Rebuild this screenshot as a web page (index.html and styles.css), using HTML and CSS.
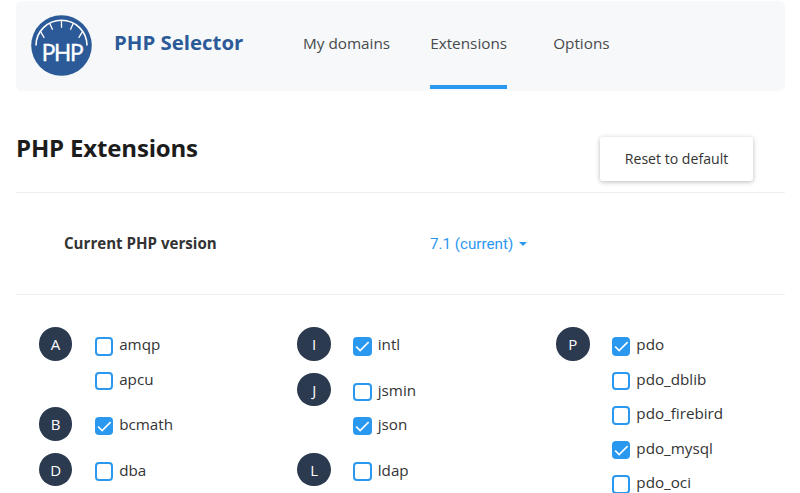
FILE: index.html
```html
<!DOCTYPE html>
<html lang="en">
<head>
<meta charset="utf-8">
<title>PHP Selector</title>
<link rel="stylesheet" href="styles.css">
</head>
<body>
<header class="bar">
  <svg class="logo" viewBox="0 0 61 61">
    <circle cx="30.5" cy="30.5" r="30.3" fill="#2c5a99"/>
    <g fill="none" stroke="#fff" stroke-width="1.3">
      <path stroke-width="1.6" d="M5 30.5a25.5 25.2 0 0 1 51 0"/>
      <path d="M30.5 5.5v7.3M18.8 8.4l2.8 6.4M42.2 8.4l-2.8 6.4M9.6 16.6l3.7 6.2M51.4 16.6l-3.7 6.2"/>
    </g>
    <text class="logo-text" x="31" y="45.6" text-anchor="middle">PHP</text>
  </svg>
  <span class="brand">PHP Selector</span>
  <nav class="tabs">
    <a class="tab">My domains</a>
    <a class="tab active">Extensions</a>
    <a class="tab">Options</a>
  </nav>
</header>
<main>
  <section class="heading">
    <h1>PHP Extensions</h1>
    <button class="reset">Reset to default</button>
  </section>
  <section class="version">
    <span class="version-label">Current PHP version</span>
    <a class="version-value">7.1 (current)<i class="caret"></i></a>
  </section>
  <section class="columns">
    <div class="column">
      <div class="group"><b class="letter">A</b><div class="items">
        <label class="item"><i class="box"></i>amqp</label>
        <label class="item"><i class="box"></i>apcu</label>
      </div></div>
      <div class="group"><b class="letter">B</b><div class="items">
        <label class="item"><i class="box on"><svg viewBox="0 0 18 18"><path d="M3 9.3l4 4L15.3 5"/></svg></i>bcmath</label>
      </div></div>
      <div class="group"><b class="letter">D</b><div class="items">
        <label class="item"><i class="box"></i>dba</label>
      </div></div>
    </div>
    <div class="column">
      <div class="group"><b class="letter">I</b><div class="items">
        <label class="item"><i class="box on"><svg viewBox="0 0 18 18"><path d="M3 9.3l4 4L15.3 5"/></svg></i>intl</label>
      </div></div>
      <div class="group"><b class="letter">J</b><div class="items">
        <label class="item"><i class="box"></i>jsmin</label>
        <label class="item"><i class="box on"><svg viewBox="0 0 18 18"><path d="M3 9.3l4 4L15.3 5"/></svg></i>json</label>
      </div></div>
      <div class="group"><b class="letter">L</b><div class="items">
        <label class="item"><i class="box"></i>ldap</label>
      </div></div>
    </div>
    <div class="column">
      <div class="group"><b class="letter">P</b><div class="items">
        <label class="item"><i class="box on"><svg viewBox="0 0 18 18"><path d="M3 9.3l4 4L15.3 5"/></svg></i>pdo</label>
        <label class="item"><i class="box"></i>pdo_dblib</label>
        <label class="item"><i class="box"></i>pdo_firebird</label>
        <label class="item"><i class="box on"><svg viewBox="0 0 18 18"><path d="M3 9.3l4 4L15.3 5"/></svg></i>pdo_mysql</label>
        <label class="item"><i class="box"></i>pdo_oci</label>
      </div></div>
    </div>
  </section>
</main>
</body>
</html>
```
FILE: styles.css
```css
* { box-sizing: border-box; }
html { overflow: hidden; }
body {
  margin: 0;
  padding: 1px 15px 0 16px;
  height: 493px;
  overflow: hidden;
  background: #fff;
  color: #333;
  font: 15.2px/20px "Open Sans", sans-serif;
}
.bar {
  display: flex;
  height: 90px;
  border-radius: 6px;
  background: #f6f8fa;
}
.logo { width: 61px; height: 61px; margin: 14px 0 0 15px; flex: none; }
.logo-text { font: 22.5px Lato, sans-serif; fill: #fff; stroke: #fff; stroke-width: .3; letter-spacing: -1.2px; }
.brand {
  width: 189px;
  margin: 27px 0 0 22px;
  flex: none;
  color: #2c5a99;
  font-size: 20.4px;
  font-weight: 700;
  line-height: 28px;
  white-space: nowrap;
}
.tabs { display: flex; white-space: nowrap; }
.tab { height: 88px; padding-top: 32px; color: #484a4c; font-size: 15.3px; }
.tab.active { margin: 0 46px 0 40px; border-bottom: 4px solid #2b98f0; }
.heading {
  display: flex;
  justify-content: space-between;
  height: 102px;
  padding-right: 32px;
  border-bottom: 1px solid #efefef;
}
h1 {
  margin: 41px 0 0;
  color: #1c1c1c;
  font-size: 24px;
  line-height: 32px;
  letter-spacing: -.17px;
  white-space: nowrap;
}
.reset {
  width: 153px;
  height: 44px;
  margin-top: 46px;
  padding: 0;
  border: 0;
  border-radius: 3px;
  background: #fff;
  box-shadow: 0 1px 5px rgba(0, 0, 0, .28);
  color: #333;
  font: 14.1px/20px "Open Sans", sans-serif;
}
.version {
  display: flex;
  align-items: center;
  height: 102px;
  padding-left: 48px;
  border-bottom: 1px solid #efefef;
}
.version-label { width: 366px; padding-bottom: 2px; font-size: 15.1px; font-weight: 700; }
.version-value {
  display: flex;
  align-items: center;
  gap: 6px;
  color: #2b98f0;
  font-family: Roboto, sans-serif;
}
.caret {
  border: 4.5px solid transparent;
  border-top-color: #2b98f0;
  border-bottom: 0;
}
.columns {
  display: grid;
  grid-template-columns: repeat(3, 258.6px);
  padding: 32.4px 0 0 22.8px;
}
.group { display: flex; margin-bottom: 10.9px; }
.letter {
  width: 33.6px;
  height: 33.6px;
  margin-right: 22.4px;
  border-radius: 50%;
  background: #2b3a4e;
  color: #fff;
  font-size: 15px;
  font-weight: 400;
  line-height: 34.6px;
  text-align: center;
}
.item { display: flex; height: 34.5px; line-height: 35.5px; }
.box {
  width: 18.4px;
  height: 18.4px;
  margin: 9.8px 6px 0 0;
  border: 2px solid #2b98f0;
  border-radius: 4px;
}
.box.on { border: 0; background: #2b98f0; }
.box svg { display: block; fill: none; stroke: #fff; stroke-width: 1.6; }
```
